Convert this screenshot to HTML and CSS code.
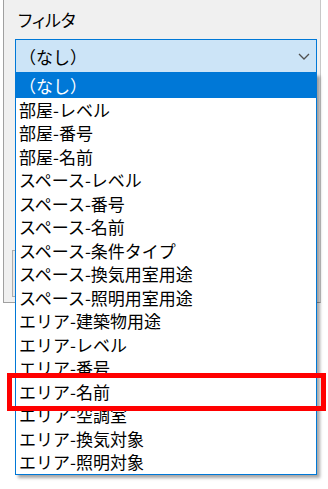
FILE: index.html
```html
<!DOCTYPE html>
<html lang="ja">
<head>
  <meta charset="utf-8">
  <title>フィルタ</title>
  <link rel="stylesheet" href="styles.css">
</head>
<body>
  <div class="panel">
    <div class="filter-label">フィルタ</div>

    <div class="combo">
      <div class="combo-box">
        <span class="combo-value">（なし）</span>
        <svg class="chevron" width="12" height="7" viewBox="0 0 12 7">
          <path d="M1 1 L6 6 L11 1" fill="none" stroke="#505050" stroke-width="1.3"/>
        </svg>
      </div>

      <!-- Open dropdown list drawn over the panel. -->
      <ul class="combo-list">
        <li class="selected">（なし）</li>
        <li>部屋-レベル</li>
        <li>部屋-番号</li>
        <li>部屋-名前</li>
        <li>スペース-レベル</li>
        <li>スペース-番号</li>
        <li>スペース-名前</li>
        <li>スペース-条件タイプ</li>
        <li>スペース-換気用室用途</li>
        <li>スペース-照明用室用途</li>
        <li>エリア-建築物用途</li>
        <li>エリア-レベル</li>
        <li>エリア-番号</li>
        <li>エリア-名前</li>
        <li>エリア-空調室</li>
        <li>エリア-換気対象</li>
        <li>エリア-照明対象</li>
      </ul>
    </div>

    <div class="group-box"></div>
  </div>

  <div class="highlight-mark"></div>
</body>
</html>
```

FILE: styles.css
```css
body {
  margin: 0;
  min-height: 489px;
  background-color: white;
  font-family: "Noto Sans CJK JP", "Noto Sans", sans-serif;
  color: #000;
}

.panel {
  margin-left: 3px;
  width: 318px;
  height: 303px;
  box-sizing: border-box;
  background-color: #f0f0f0;
  border-left: 1px solid #a0a0a0;
  border-right: 1px solid #c8c8c8;
  border-bottom: 1px solid #a0a0a0;
  padding: 0 0 0 11px;
}

.filter-label {
  font-size: 17px;
  line-height: 20px;
  padding: 10px 0 0 3px;
  height: 29px;
  font-feature-settings: "palt";
}

.combo {
  position: relative;
  width: 302px;
  z-index: 2;
}

.combo-box {
  height: 34px;
  box-sizing: border-box;
  border: 1px solid #0078d7;
  background-color: #cce4f7;
  display: flex;
  align-items: center;
  justify-content: space-between;
  padding: 0 6px 0 3px;
  font-size: 17px;
}

.chevron {
  display: block;
}

.combo-list {
  position: absolute;
  top: 34px;
  left: 0;
  width: 302px;
  box-sizing: border-box;
  margin: 0;
  padding: 0;
  list-style: none;
  background-color: white;
  border: 1px solid #0078d7;
  box-shadow: 3px 3px 3px rgba(0, 0, 0, 0.35);
  font-size: 17px;
}

.combo-list li {
  height: 23.5px;
  line-height: 23.5px;
  padding-left: 3px;
  white-space: nowrap;
}

.combo-list li.selected {
  background-color: #0078d7;
  color: white;
}

.group-box {
  margin-top: 177px;
  margin-left: -3px;
  width: 302px;
  height: 47px;
  box-sizing: border-box;
  border: 1px solid #adadad;
  background-color: #e8e8e8;
}

.highlight-mark {
  position: absolute;
  left: 7px;
  top: 373px;
  width: 319px;
  height: 38px;
  box-sizing: border-box;
  border: 5px solid #ff0000;
  z-index: 3;
}
```
